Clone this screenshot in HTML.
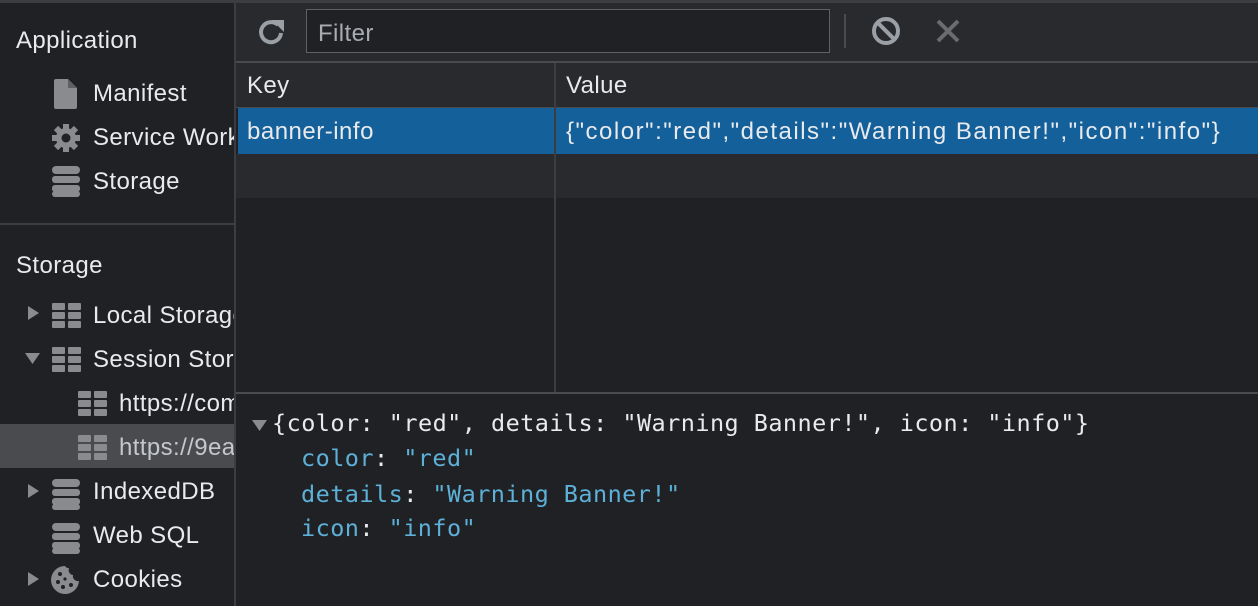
<!DOCTYPE html>
<html><head><style>
*{margin:0;padding:0;box-sizing:border-box}
body{width:1258px;height:606px;background:#202124;font-family:"Liberation Sans",sans-serif;color:#e8eaed;position:relative;overflow:hidden;font-size:24px}
.a{position:absolute;white-space:nowrap}
.topb{left:0;top:0;width:1258px;height:3px;background:#3c3d40}
.side{left:0;top:3px;width:234px;height:603px;background:#202124;overflow:hidden}
.side .t{letter-spacing:0.4px}
.vb{left:234px;top:3px;width:2px;height:603px;background:#3c3d40}
.t{position:absolute;white-space:nowrap;font-size:24px;color:#e8eaed}
.mono{font-family:"DejaVu Sans Mono","Liberation Mono",monospace;font-size:23.5px;letter-spacing:0.45px}
</style></head><body>
<div class="a topb"></div>
<div class="a side">
 <div class="t" style="left:16px;top:24px">Application</div>
 <svg class="a" style="left:54px;top:76px" width="24" height="30"><path d="M0 2Q0 0 2 0H14L23 9V28Q23 30 21 30H2Q0 30 0 28Z" fill="#8a8b8e"/><path d="M14 0V9H23" fill="#5f6063"/></svg>
 <div class="t" style="left:93px;top:77px">Manifest</div>
 <svg class="a" style="left:51px;top:120px" width="30" height="30" viewBox="0 0 30 30"><g fill="#8a8b8e"><circle cx="15" cy="15" r="10"/><g stroke="#8a8b8e" stroke-width="6"><line x1="15" y1="1" x2="15" y2="29"/><line x1="1" y1="15" x2="29" y2="15"/><line x1="5" y1="5" x2="25" y2="25"/><line x1="25" y1="5" x2="5" y2="25"/></g></g><circle cx="15" cy="15" r="4.5" fill="#202124"/></svg>
 <div class="t" style="left:93px;top:121px">Service Workers</div>
 <svg class="a" style="left:52px;top:163px" width="28" height="32"><g fill="#8a8b8e"><rect x="0" y="0" width="28" height="8" rx="4"/><rect x="0" y="10" width="28" height="7" rx="3"/><rect x="0" y="19" width="28" height="7" rx="3"/><rect x="0" y="25" width="28" height="6" rx="3"/></g></svg>
 <div class="t" style="left:93px;top:165px">Storage</div>
 <div class="a" style="left:0;top:220px;width:234px;height:2px;background:#3c3d40"></div>
 <div class="t" style="left:16px;top:249px">Storage</div>
 <svg class="a" style="left:28px;top:303px" width="12" height="14"><path d="M0 0L11 7L0 14Z" fill="#8a8b8e"/></svg>
 <svg class="a" style="left:52px;top:300px" width="30" height="26"><g fill="#8a8b8e"><rect x="0" y="0" width="13" height="7" rx="1"/><rect x="16" y="0" width="13" height="7" rx="1"/><rect x="0" y="9" width="13" height="7" rx="1"/><rect x="16" y="9" width="13" height="7" rx="1"/><rect x="0" y="18" width="13" height="7" rx="1"/><rect x="16" y="18" width="13" height="7" rx="1"/></g></svg>
 <div class="t" style="left:93px;top:299px">Local Storage</div>
 <svg class="a" style="left:25px;top:350px" width="16" height="12"><path d="M0 0H15L7.5 11Z" fill="#8a8b8e"/></svg>
 <svg class="a" style="left:52px;top:344px" width="30" height="26"><g fill="#8a8b8e"><rect x="0" y="0" width="13" height="7" rx="1"/><rect x="16" y="0" width="13" height="7" rx="1"/><rect x="0" y="9" width="13" height="7" rx="1"/><rect x="16" y="9" width="13" height="7" rx="1"/><rect x="0" y="18" width="13" height="7" rx="1"/><rect x="16" y="18" width="13" height="7" rx="1"/></g></svg>
 <div class="t" style="left:93px;top:343px">Session Storage</div>
 <svg class="a" style="left:78px;top:388px" width="30" height="26"><g fill="#8a8b8e"><rect x="0" y="0" width="13" height="7" rx="1"/><rect x="16" y="0" width="13" height="7" rx="1"/><rect x="0" y="9" width="13" height="7" rx="1"/><rect x="16" y="9" width="13" height="7" rx="1"/><rect x="0" y="18" width="13" height="7" rx="1"/><rect x="16" y="18" width="13" height="7" rx="1"/></g></svg>
 <div class="t" style="left:119px;top:387px">https://commons</div>
 <div class="a" style="left:0;top:421px;width:234px;height:44px;background:#4a4b4e"></div>
 <svg class="a" style="left:78px;top:432px" width="30" height="26"><g fill="#8a8b8e"><rect x="0" y="0" width="13" height="7" rx="1"/><rect x="16" y="0" width="13" height="7" rx="1"/><rect x="0" y="9" width="13" height="7" rx="1"/><rect x="16" y="9" width="13" height="7" rx="1"/><rect x="0" y="18" width="13" height="7" rx="1"/><rect x="16" y="18" width="13" height="7" rx="1"/></g></svg>
 <div class="t" style="left:119px;top:431px;color:#c4c7cc">https://9ea</div>
 <svg class="a" style="left:28px;top:481px" width="12" height="14"><path d="M0 0L11 7L0 14Z" fill="#8a8b8e"/></svg>
 <svg class="a" style="left:52px;top:476px" width="28" height="32"><g fill="#8a8b8e"><rect x="0" y="0" width="28" height="8" rx="4"/><rect x="0" y="10" width="28" height="7" rx="3"/><rect x="0" y="19" width="28" height="7" rx="3"/><rect x="0" y="25" width="28" height="6" rx="3"/></g></svg>
 <div class="t" style="left:93px;top:475px">IndexedDB</div>
 <svg class="a" style="left:52px;top:520px" width="28" height="32"><g fill="#8a8b8e"><rect x="0" y="0" width="28" height="8" rx="4"/><rect x="0" y="10" width="28" height="7" rx="3"/><rect x="0" y="19" width="28" height="7" rx="3"/><rect x="0" y="25" width="28" height="6" rx="3"/></g></svg>
 <div class="t" style="left:93px;top:519px">Web SQL</div>
 <svg class="a" style="left:28px;top:569px" width="12" height="14"><path d="M0 0L11 7L0 14Z" fill="#8a8b8e"/></svg>
 <svg class="a" style="left:50px;top:562px" width="30" height="30"><path d="M15 1A14 14 0 1 0 29 16A5 5 0 0 1 23 10A5 5 0 0 1 19 3A4 4 0 0 1 15 1Z" fill="#8a8b8e"/><g fill="#202124"><circle cx="10" cy="9" r="2"/><circle cx="8" cy="17" r="2"/><circle cx="15" cy="14" r="1.6"/><circle cx="13" cy="22" r="2"/><circle cx="21" cy="20" r="2"/></g></svg>
 <div class="t" style="left:93px;top:563px">Cookies</div>
</div>
<div class="a vb"></div>
<div class="a" style="left:236px;top:3px;width:1022px;height:58px;background:#292a2d"></div>
<div class="a" style="left:236px;top:61px;width:1022px;height:2px;background:#4a4b4e"></div>
<svg class="a" style="left:257px;top:18px" width="30" height="28" viewBox="0 0 30 28"><path d="M21 7A10 10 0 1 0 24 15" fill="none" stroke="#9aa0a6" stroke-width="4"/><path d="M15 2H27V14Z" fill="#9aa0a6"/></svg>
<div class="a" style="left:306px;top:9px;width:524px;height:44px;border:1px solid #5f6063;background:#202124"></div>
<div class="t" style="left:318px;top:20px;color:#a8acb1;letter-spacing:0.4px">Filter</div>
<div class="a" style="left:844px;top:14px;width:2px;height:34px;background:#4a4b4e"></div>
<svg class="a" style="left:870px;top:16px" width="32" height="30"><circle cx="16" cy="15" r="12" fill="none" stroke="#9aa0a6" stroke-width="4"/><line x1="8" y1="7" x2="24" y2="23" stroke="#9aa0a6" stroke-width="4"/></svg>
<svg class="a" style="left:936px;top:19px" width="24" height="24"><path d="M2 2L22 22M22 2L2 22" stroke="#6b6c6f" stroke-width="4"/></svg>
<div class="a" style="left:236px;top:63px;width:1022px;height:45px;background:#292a2d"></div>
<div class="a" style="left:236px;top:107px;width:1022px;height:1px;background:#4a4b4e"></div>
<div class="t" style="left:247px;top:72px;letter-spacing:0.4px">Key</div>
<div class="t" style="left:566px;top:72px;letter-spacing:0.4px">Value</div>
<div class="a" style="left:238px;top:108px;width:1020px;height:46px;background:#14609b"></div>
<div class="t" style="left:247px;top:118px;letter-spacing:0.5px">banner-info</div>
<div class="t" style="left:566px;top:118px;letter-spacing:1.5px">{"color":"red","details":"Warning Banner!","icon":"info"}</div>
<div class="a" style="left:236px;top:154px;width:1022px;height:44px;background:#292a2d"></div>
<div class="a" style="left:554px;top:63px;width:2px;height:330px;background:#3c3d40"></div>
<div class="a" style="left:236px;top:392px;width:1022px;height:2px;background:#4a4b4e"></div>
<svg class="a" style="left:252px;top:420px" width="16" height="12"><path d="M0 0H15L7.5 11Z" fill="#8a8b8e"/></svg>
<div class="t mono" style="left:272px;top:409px">{color: "red", details: "Warning Banner!", icon: "info"}</div>
<div class="t mono" style="left:301px;top:444px;color:#5db0d7">color<span style="color:#e8eaed">:</span> "red"</div>
<div class="t mono" style="left:301px;top:480px;color:#5db0d7">details<span style="color:#e8eaed">:</span> "Warning Banner!"</div>
<div class="t mono" style="left:301px;top:514px;color:#5db0d7">icon<span style="color:#e8eaed">:</span> "info"</div>
</body></html>
